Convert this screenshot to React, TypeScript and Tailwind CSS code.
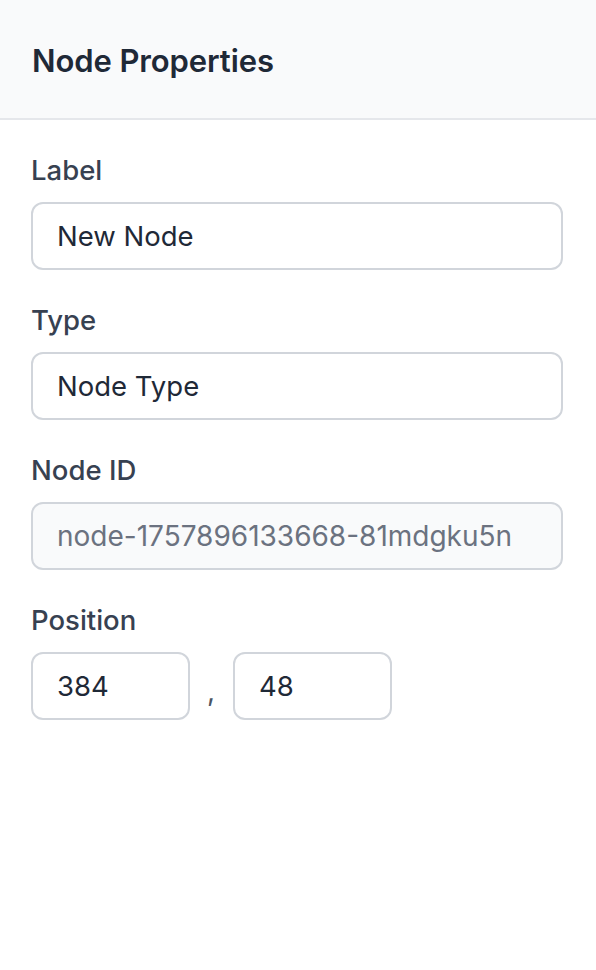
export default function App() {
  const font = { fontFamily: "Inter, 'Noto Sans', sans-serif" };
  const label = "text-[27.5px] leading-[40px] font-medium text-[#374151] pt-[2px] mb-[12px]";
  const input = "h-[68px] w-full rounded-[12px] border-2 border-[#d1d5db] bg-white px-[24px] text-[27.5px] text-[#1f2937] outline-none";
  return (
    <div className="w-[596px] h-[970px] bg-white" style={font}>
      <div className="h-[120px] bg-[#f9fafb] border-b-2 border-[#e5e7eb] flex items-center pl-[32px]">
        <h2 className="text-[31px] leading-[40px] font-semibold text-[#1f2937] pt-[4px] tracking-[-0.1px]">Node Properties</h2>
      </div>
      <div className="pt-[28px] pl-[31px] pr-[33px] flex flex-col gap-[28px]">
        <div className="flex flex-col">
          <label className={label}>Label</label>
          <input readOnly value="New Node" className={input} />
        </div>
        <div className="flex flex-col">
          <label className={label}>Type</label>
          <input readOnly value="Node Type" className={input} />
        </div>
        <div className="flex flex-col">
          <label className={label}>Node ID</label>
          <input
            readOnly
            value="node-1757896133668-81mdgku5n"
            className="h-[68px] w-full rounded-[12px] border-2 border-[#d1d5db] bg-[#f9fafb] px-[24px] text-[28px] text-[#6b7280] outline-none"
          />
        </div>
        <div className="flex flex-col">
          <label className={label}>Position</label>
          <div className="flex items-center">
            <input
              readOnly
              value="384"
              className="h-[68px] w-[159px] rounded-[12px] border-2 border-[#d1d5db] bg-white px-[24px] text-[27.5px] text-[#1f2937] outline-none"
            />
            <span className="text-[28px] text-[#4b5563] leading-[40px] mt-[10px] ml-[17px] mr-[18px]">,</span>
            <input
              readOnly
              value="48"
              className="h-[68px] w-[159px] rounded-[12px] border-2 border-[#d1d5db] bg-white px-[24px] text-[27.5px] text-[#1f2937] outline-none"
            />
          </div>
        </div>
      </div>
    </div>
  );
}
